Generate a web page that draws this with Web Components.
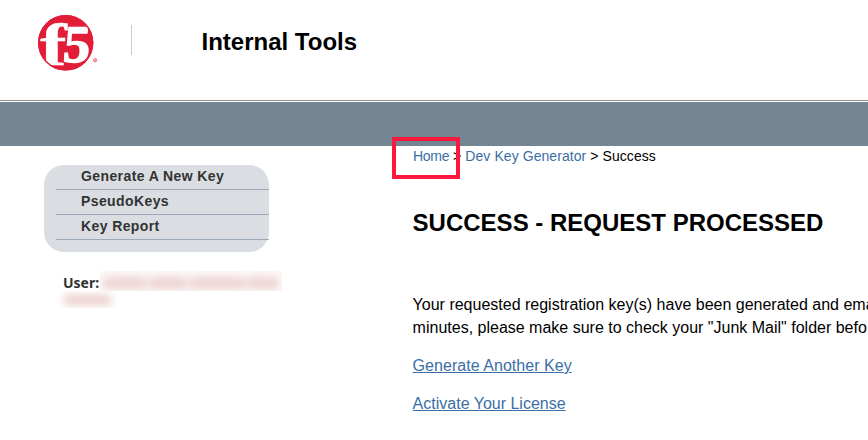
<!DOCTYPE html>
<html lang="en"><head><meta charset="utf-8"><title>Internal Tools</title>
<style>
html,body{margin:0;height:100%;background:#fff;overflow:hidden;font-family:"Liberation Sans",Arial,sans-serif;color:#000}
</style></head><body>
<tools-page></tools-page>
<script>
const define=(name,html)=>customElements.define(name,class extends HTMLElement{
  constructor(){super();this.attachShadow({mode:'open'}).innerHTML=html;}
});
define('f5-logo',`<style>:host{display:block;width:62px;height:60px}svg{display:block}text{font-family:"Liberation Serif",serif;font-weight:bold;fill:#fff;stroke:#fff}</style>
<svg width="62" height="60" viewBox="36 12 62 60" role="img" aria-label="f5">
<circle cx="65.7" cy="42.8" r="27.7" fill="#e21d38"/>
<text transform="translate(40 64.5) scale(1.34 1)" font-size="60" stroke-width=".3">f</text>
<text transform="translate(62 62) skewX(-5) scale(1.02 1)" font-size="53" stroke-width="1.3">5</text>
<circle cx="65.7" cy="42.8" r="27" fill="none" stroke="#e21d38" stroke-width="1.4"/>
<circle cx="95.2" cy="60.2" r="1.7" fill="none" stroke="#e21d38" stroke-width=".6"/><circle cx="95.2" cy="60.2" r=".7" fill="#e21d38"/>
</svg>`);
define('site-header',`<style>:host{display:block}header{display:flex;height:100px;border-bottom:1px solid #8f9293;margin-bottom:1px}
f5-logo{margin:12px 0 0 36px}i{width:1px;height:30px;background:#ccc;margin:25px 69.5px 0 33px}
h1{margin:28px 0 0;font-size:24px;line-height:28px}.bar{height:44px;background:#738492}</style>
<header><f5-logo></f5-logo><i></i><h1><slot></slot></h1></header><div class="bar"></div>`);
define('menu-item',`<style>:host{display:block;height:24px;border-bottom:1px solid #9caaba;padding-left:25px;font:bold 14px/22px "Liberation Sans",Arial,sans-serif;letter-spacing:.4px;color:#333}</style><slot></slot>`);
define('side-menu',`<style>:host{display:block;width:213px;height:87px;padding-left:12px;background:#dadee2;border-radius:20px}</style><slot></slot>`);
define('user-info',`<style>:host{display:block;margin:23px 0 0 19px;width:225px;font:bold 14px/16px "Noto Sans","Liberation Sans",sans-serif;color:#333}
.row{display:flex;height:16px}.mask{overflow:hidden;height:20px;margin-top:-4px;background:#fdf8f8}
.a{width:182px;margin-left:1px}.b{width:70px;height:17px;margin:0 0 0 -7px;background:none}
.soft{display:flex;gap:3px;padding:7px 4px;filter:blur(4px)}.b .soft{padding:4px 8px}.soft i{height:10px;background:#ebcdcc}</style>
<div class="row"><span>User:</span><div class="mask a"><div class="soft"><i style="width:42px"></i><i style="width:38px"></i><i style="width:56px"></i><i style="width:30px"></i></div></div></div>
<div class="mask b"><div class="soft"><i style="width:47px"></i></div></div>`);
define('bread-crumb',`<style>:host{display:block;font-size:14px;line-height:16px;white-space:nowrap;position:relative;letter-spacing:.07px}
a{color:#3a6ea5}.home{letter-spacing:-.3px}.mark{position:absolute;left:-21px;top:-11px;width:60px;height:34px;border:4px solid #ff173d}</style>
<nav><a class="home">Home</a> &gt; <a>Dev Key Generator</a> &gt; <span>Success</span></nav><div class="mark"></div>`);
define('success-message',`<style>:host{display:block;white-space:nowrap;font-size:16px;line-height:23px;margin-left:-.4px}
h2{font-size:24px;line-height:28px;margin:45px 0 56px}p{margin:0 0 15px}a{color:#3a6ea5;text-decoration:underline}.g{letter-spacing:.04px}</style>
<h2>SUCCESS - REQUEST PROCESSED</h2>
<p>Your requested registration key(s) have been generated and ema<br>minutes, please make sure to check your "Junk Mail" folder befo</p>
<p><a class="g">Generate Another Key</a></p><p><a>Activate Your License</a></p>`);
define('tools-page',`<style>:host{display:block;width:868px;height:440px;overflow:hidden}.body{display:flex}
aside{width:225px;padding:19px 0 0 44px;margin-right:144px}main{padding-top:2px}</style>
<site-header>Internal Tools</site-header><div class="body"><aside><side-menu><menu-item>Generate A New Key</menu-item><menu-item>PseudoKeys</menu-item><menu-item>Key Report</menu-item></side-menu><user-info></user-info></aside>
<main><bread-crumb></bread-crumb><success-message></success-message></main></div>`);
</script></body></html>
